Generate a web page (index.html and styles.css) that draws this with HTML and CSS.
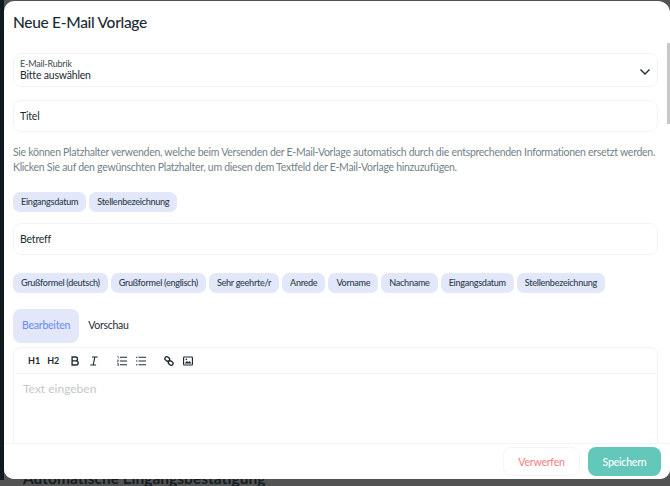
FILE: index.html
```html
<!DOCTYPE html>
<html lang="de">
<head>
<meta charset="utf-8">
<title>Neue E-Mail Vorlage</title>
<link rel="stylesheet" href="styles.css">
</head>
<body>
<div class="backdrop-edge"></div>
<div class="backdrop-text">Automatische Eingangsbestätigung</div>
<div class="modal">
  <div class="scroller">
    <h1 class="title">Neue E-Mail Vorlage</h1>
    <div class="field select">
      <div class="select-text">
        <div class="field-label">E-Mail-Rubrik</div>
        <div class="field-value">Bitte auswählen</div>
      </div>
      <svg class="chevron" width="12" height="8" viewBox="0 0 12 8"><path d="M1.5 1.5 6 6l4.5-4.5" fill="none" stroke="#1c2b33" stroke-width="1.4"/></svg>
    </div>
    <div class="field plain">Titel</div>
    <p class="hint">Sie können Platzhalter verwenden, welche beim Versenden der E-Mail-Vorlage automatisch durch die entsprechenden Informationen ersetzt werden. Klicken Sie auf den gewünschten Platzhalter, um diesen dem Textfeld der E-Mail-Vorlage hinzuzufügen.</p>
    <div class="chips chips-first">
      <span class="chip">Eingangsdatum</span>
      <span class="chip">Stellenbezeichnung</span>
    </div>
    <div class="field plain subject">Betreff</div>
    <div class="chips chips-second">
      <span class="chip">Grußformel (deutsch)</span>
      <span class="chip">Grußformel (englisch)</span>
      <span class="chip">Sehr geehrte/r</span>
      <span class="chip">Anrede</span>
      <span class="chip">Vorname</span>
      <span class="chip">Nachname</span>
      <span class="chip">Eingangsdatum</span>
      <span class="chip">Stellenbezeichnung</span>
    </div>
    <div class="tabs">
      <span class="tab active">Bearbeiten</span>
      <span class="tab">Vorschau</span>
    </div>
    <div class="editor">
      <div class="toolbar">
        <div class="tool-group">
          <span class="tool-text h1">H1</span>
          <span class="tool-text h2">H2</span>
          <svg class="icon" viewBox="0 0 12 12"><path d="M2.5 1.2h4.2a2.3 2.3 0 0 1 0 4.6H2.5zM2.5 5.8h4.8a2.5 2.5 0 0 1 0 5H2.5z" fill="none" stroke="#1c2b33" stroke-width="1.6"/></svg>
          <svg class="icon" viewBox="0 0 12 12"><path d="M3.5 1.2h7M1.5 10.8h7M7 1.2 5 10.8" fill="none" stroke="#1c2b33" stroke-width="1.4"/></svg>
        </div>
        <div class="tool-group">
          <svg class="icon" viewBox="0 0 12 12"><path d="M3.5 1.5h8.5M3.5 6h8.5M3.5 10.5h8.5" stroke="#1c2b33" stroke-width="1.3"/><path d="M.3 .5h1.2v2.6M.2 4.8h1.5v1.2H.3v1.2h1.5M.2 9h1.5v3H.2M.4 10.5h1.3" fill="none" stroke="#1c2b33" stroke-width=".7"/></svg>
          <svg class="icon" viewBox="0 0 12 12"><path d="M3 1.5h9M3 6h9M3 10.5h9" stroke="#1c2b33" stroke-width="1.3"/><path d="M0 1.5h1.6M0 6h1.6M0 10.5h1.6" stroke="#1c2b33" stroke-width="1.4"/></svg>
        </div>
        <div class="tool-group">
          <svg class="icon" viewBox="0 0 12 12"><rect x=".9" y="1.4" width="6" height="4.4" rx="2.2" transform="rotate(35 4 3.6)" fill="none" stroke="#1c2b33" stroke-width="1.6"/><rect x="5.1" y="6.2" width="6" height="4.4" rx="2.2" transform="rotate(35 8 8.4)" fill="none" stroke="#1c2b33" stroke-width="1.6"/></svg>
          <svg class="icon" viewBox="0 0 12 12"><rect x=".7" y="1.2" width="10.6" height="9.6" rx=".8" fill="none" stroke="#1c2b33" stroke-width="1.4"/><path d="M2 9l2.6-3 1.8 1.6L8 6l2 3z" fill="#1c2b33"/><circle cx="4" cy="4" r="1" fill="#1c2b33"/></svg>
        </div>
      </div>
      <div class="editor-body">Text eingeben</div>
    </div>
    <div class="scrollbar"></div>
  </div>
  <div class="footer">
    <button class="btn discard">Verwerfen</button>
    <button class="btn save">Speichern</button>
  </div>
</div>
</body>
</html>
```
FILE: styles.css
```css
* { box-sizing: border-box; }
html, body { margin: 0; height: 100%; }
body {
  width: 670px;
  height: 486px;
  overflow: hidden;
  background: #535353;
  position: relative;
  font-family: Lato, "Noto Sans", sans-serif;
  color: #1c2b33;
  padding: 1px 0 7px 4px;
}
.backdrop-edge {
  position: absolute;
  left: 0;
  top: 0;
  width: 4px;
  height: 480px;
  background: #0f1a20;
}
.backdrop-text {
  position: absolute;
  left: 23px;
  top: 469px;
  font-size: 15.5px;
  font-weight: 700;
  color: #111c22;
}
.modal {
  position: relative;
  height: 478px;
  background: #fff;
  border-radius: 10px 12px 10px 10px;
  display: flex;
  flex-direction: column;
  overflow: hidden;
}
.scroller {
  position: relative;
  flex: 1;
  overflow: hidden;
  padding: 0 12px 0 9px;
}
.title {
  margin: 11px 0 21px;
  font-size: 15.5px;
  line-height: 20px;
  font-weight: 500;
  letter-spacing: -.3px;
}
.field {
  border: 1px solid #f3f3f5;
  border-radius: 8px;
}
.select {
  height: 34px;
  display: flex;
  justify-content: space-between;
  align-items: center;
  padding: 0 6px;
  margin-bottom: 13px;
}
.field-label { font-size: 9px; line-height: 10px; color: #3c4a52; letter-spacing: -.2px; }
.field-value { font-size: 10.5px; line-height: 13px; letter-spacing: -.2px; }
.chevron { margin-top: 3px; }
.plain {
  height: 32px;
  font-size: 10.5px;
  line-height: 30px;
  padding-left: 6px;
  letter-spacing: -.2px;
}
.hint {
  margin: 13px 0 0;
  font-size: 10.5px;
  line-height: 15px;
  letter-spacing: -.28px;
  color: #737f87;
}
.chips { display: flex; gap: 3px; }
.chips-first { margin-top: 17px; }
.chips-second { margin-top: 18px; }
.chip {
  height: 20px;
  padding: 0 8px;
  background: #e2e8fa;
  border-radius: 7px;
  font-size: 9.1px;
  letter-spacing: -.3px;
  line-height: 20px;
  font-weight: 500;
  color: #2e3d4a;
  white-space: nowrap;
}
.subject { margin-top: 11px; }
.tabs { display: flex; margin-top: 16px; }
.tab {
  height: 34px;
  padding: 0 9px;
  border-radius: 8px;
  font-size: 10.5px;
  letter-spacing: -.25px;
  line-height: 33px;
}
.tab.active { background: #e2e8fa; color: #6f8df5; font-weight: 500; }
.editor {
  margin-top: 4px;
  height: 109px;
  border: 1px solid #f3f3f5;
  border-radius: 8px 8px 0 0;
}
.toolbar {
  height: 26px;
  display: flex;
  align-items: center;
  gap: 18px;
  padding-left: 14px;
  border-bottom: 1px solid #f3f3f5;
}
.tool-group { display: flex; align-items: center; gap: 9px; }
.tool-text { font-size: 9px; font-weight: 700; }
.h1 { margin-right: -2px; }
.h2 { margin-right: 2px; }
.icon { width: 10px; height: 10px; }
.editor-body {
  padding: 7px 9px;
  font-size: 12px;
  color: #c4c8cb;
}
.scrollbar {
  position: absolute;
  right: 0;
  top: 42px;
  width: 3px;
  height: 81px;
  background: #c8c8c8;
}
.footer {
  height: 36px;
  flex: none;
  border-top: 1px solid #f3f3f5;
  display: flex;
  justify-content: flex-end;
  gap: 8px;
  padding: 3px 9px 0 0;
  background: #fff;
}
.btn {
  height: 29px;
  border-radius: 8px;
  font-family: inherit;
  font-size: 10.5px;
  letter-spacing: -.2px;
  padding: 0;
}
.discard { width: 77px; background: #fff; border: 1px solid #f5f5f5; color: #f47a80; }
.save { width: 73px; background: #63c7b9; border: 0; color: #fff; font-weight: 500; }
```
